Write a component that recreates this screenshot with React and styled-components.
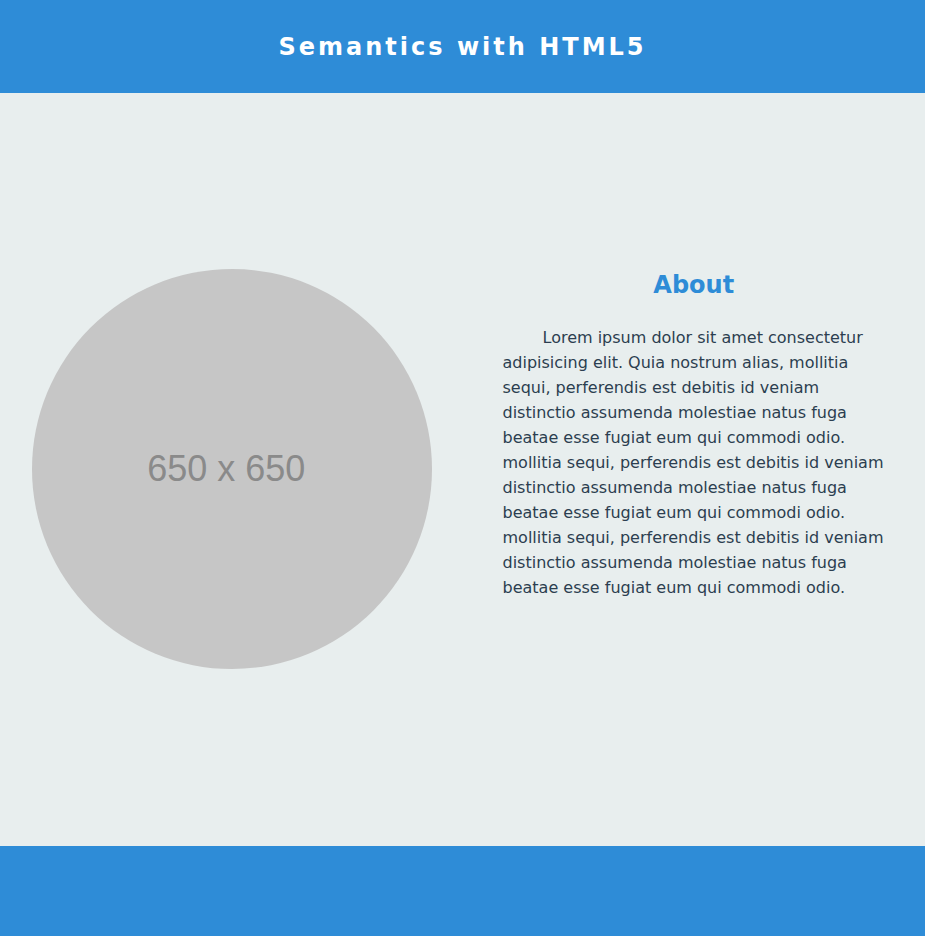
import styled, { createGlobalStyle } from "styled-components";

const GlobalStyle = createGlobalStyle`
    * {
        box-sizing: border-box;
    }

    body {
        margin: 0;
        font-family: "DejaVu Sans", Verdana, sans-serif;
        background-color: #e8eeee;
    }
`

const Header = styled.header`
    background-color: #2e8cd7;
    height: 93px;
    display: flex;
    align-items: center;
    justify-content: center;

    h1 {
        margin: 0;
        color: white;
        font-size: 24px;
        font-weight: bold;
        letter-spacing: 3px;
    }
`

const Main = styled.main`
    height: 753px;
    display: grid;
    grid-template-columns: 1fr 1fr;
    align-items: center;
`

const Figure = styled.figure`
    margin: 0 0 2px 2px;
    display: flex;
    justify-content: center;
`

const Placeholder = styled.div`
    width: 400px;
    height: 400px;
    border-radius: 50%;
    background-color: #c6c6c6;
    display: flex;
    align-items: center;
    justify-content: center;
    color: #8a8a8a;
    font-family: "Liberation Sans", Arial, sans-serif;
    font-size: 36px;

    span {
        margin-right: 12px;
    }
`

const About = styled.section`
    padding: 0 40px;
    margin-bottom: 68px;

    h2 {
        margin: 0 0 26px;
        text-align: center;
        color: #2e8cd7;
        font-size: 24px;
    }

    p {
        margin: 0;
        color: #2c3e50;
        font-size: 16px;
        line-height: 25px;
        text-indent: 40px;
    }
`

const Footer = styled.footer`
    background-color: #2e8cd7;
    height: 90px;
`

export default function App () {
    return (
        <>
            <GlobalStyle />
            <Header>
                <h1>Semantics with HTML5</h1>
            </Header>
            <Main>
                <Figure>
                    <Placeholder>
                        <span>650 x 650</span>
                    </Placeholder>
                </Figure>
                <About>
                    <h2>About</h2>
                    <p>
                        Lorem ipsum dolor sit amet consectetur adipisicing elit. Quia nostrum alias, mollitia sequi, perferendis est debitis id veniam distinctio assumenda molestiae natus fuga beatae esse fugiat eum qui commodi odio. mollitia sequi, perferendis est debitis id veniam distinctio assumenda molestiae natus fuga beatae esse fugiat eum qui commodi odio. mollitia sequi, perferendis est debitis id veniam distinctio assumenda molestiae natus fuga beatae esse fugiat eum qui commodi odio.
                    </p>
                </About>
            </Main>
            <Footer />
        </>
    )
}
